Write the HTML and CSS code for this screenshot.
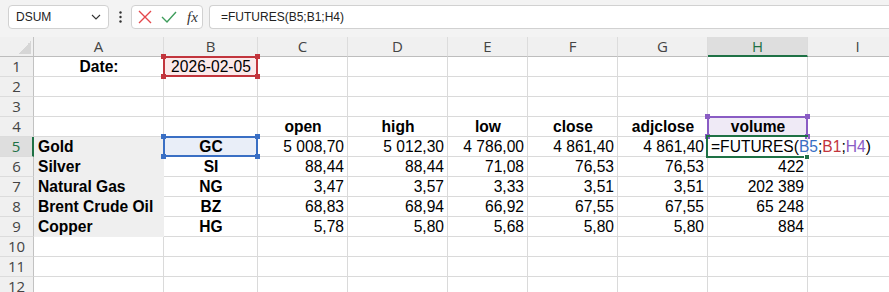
FILE: index.html
```html
<!DOCTYPE html>
<html lang="en">
<head>
  <meta charset="UTF-8">
  <meta name="viewport" content="width=device-width, initial-scale=1.0">
  <link rel="stylesheet" href="styles.css">
  <title>Futures sheet</title>
</head>
<body>
  <div class="toolbar">
    <div class="namebox">
      <span>DSUM</span>
      <svg width="10" height="6" viewBox="0 0 10 6"><path d="M1 1 L5 5 L9 1" fill="none" stroke="#333" stroke-width="1.1"/></svg>
    </div>
    <div class="more">
      <svg width="3" height="12" viewBox="0 0 3 12"><circle cx="1.5" cy="1.5" r="1.2" fill="#333"/><circle cx="1.5" cy="6" r="1.2" fill="#333"/><circle cx="1.5" cy="10.5" r="1.2" fill="#333"/></svg>
    </div>
    <div class="actions">
      <svg width="14" height="14" viewBox="0 0 14 14"><path d="M1 1 L13 13 M13 1 L1 13" stroke="#e4474b" stroke-width="1.4" fill="none"/></svg>
      <svg width="16" height="14" viewBox="0 0 16 14"><path d="M1 7 L6 12 L15 2" stroke="#3f9d5c" stroke-width="1.4" fill="none"/></svg>
      <span class="fx">fx</span>
    </div>
    <div class="formula">=FUTURES(B5;B1;H4)</div>
  </div>

  <div class="sheet">
    <!-- column headers -->
    <div class="hd corner"></div>
    <div class="hd col">A</div>
    <div class="hd col">B</div>
    <div class="hd col">C</div>
    <div class="hd col">D</div>
    <div class="hd col">E</div>
    <div class="hd col">F</div>
    <div class="hd col">G</div>
    <div class="hd col on">H</div>
    <div class="hd col">I</div>

    <!-- row 1 -->
    <div class="hd row">1</div>
    <div class="c b mid">Date:</div>
    <div class="c mid ref red">2026-02-05</div>
    <div class="c"></div><div class="c"></div><div class="c"></div><div class="c"></div><div class="c"></div><div class="c"></div><div class="c"></div>

    <!-- row 2 -->
    <div class="hd row">2</div>
    <div class="c"></div><div class="c"></div><div class="c"></div><div class="c"></div><div class="c"></div><div class="c"></div><div class="c"></div><div class="c"></div><div class="c"></div>

    <!-- row 3 -->
    <div class="hd row">3</div>
    <div class="c"></div><div class="c"></div><div class="c"></div><div class="c"></div><div class="c"></div><div class="c"></div><div class="c"></div><div class="c"></div><div class="c"></div>

    <!-- row 4 -->
    <div class="hd row">4</div>
    <div class="c"></div>
    <div class="c"></div>
    <div class="c b mid">open</div>
    <div class="c b mid">high</div>
    <div class="c b mid">low</div>
    <div class="c b mid">close</div>
    <div class="c b mid">adjclose</div>
    <div class="c b mid ref purple">volume</div>
    <div class="c"></div>

    <!-- row 5 -->
    <div class="hd row on">5</div>
    <div class="c b fill">Gold</div>
    <div class="c b mid ref blue">GC</div>
    <div class="c num">5 008,70</div>
    <div class="c num">5 012,30</div>
    <div class="c num">4 786,00</div>
    <div class="c num">4 861,40</div>
    <div class="c num">4 861,40</div>
    <div class="c active">=FUTURES(<span class="t-blue">B5</span>;<span class="t-red">B1</span>;<span class="t-purple">H4</span>)</div>
    <div class="c"></div>

    <!-- row 6 -->
    <div class="hd row">6</div>
    <div class="c b fill">Silver</div>
    <div class="c b mid">SI</div>
    <div class="c num">88,44</div>
    <div class="c num">88,44</div>
    <div class="c num">71,08</div>
    <div class="c num">76,53</div>
    <div class="c num">76,53</div>
    <div class="c num">422</div>
    <div class="c"></div>

    <!-- row 7 -->
    <div class="hd row">7</div>
    <div class="c b fill">Natural Gas</div>
    <div class="c b mid">NG</div>
    <div class="c num">3,47</div>
    <div class="c num">3,57</div>
    <div class="c num">3,33</div>
    <div class="c num">3,51</div>
    <div class="c num">3,51</div>
    <div class="c num">202 389</div>
    <div class="c"></div>

    <!-- row 8 -->
    <div class="hd row">8</div>
    <div class="c b fill">Brent Crude Oil</div>
    <div class="c b mid">BZ</div>
    <div class="c num">68,83</div>
    <div class="c num">68,94</div>
    <div class="c num">66,92</div>
    <div class="c num">67,55</div>
    <div class="c num">67,55</div>
    <div class="c num">65 248</div>
    <div class="c"></div>

    <!-- row 9 -->
    <div class="hd row">9</div>
    <div class="c b fill">Copper</div>
    <div class="c b mid">HG</div>
    <div class="c num">5,78</div>
    <div class="c num">5,80</div>
    <div class="c num">5,68</div>
    <div class="c num">5,80</div>
    <div class="c num">5,80</div>
    <div class="c num">884</div>
    <div class="c"></div>

    <!-- rows 10-12 -->
    <div class="hd row">10</div>
    <div class="c"></div><div class="c"></div><div class="c"></div><div class="c"></div><div class="c"></div><div class="c"></div><div class="c"></div><div class="c"></div><div class="c"></div>
    <div class="hd row">11</div>
    <div class="c"></div><div class="c"></div><div class="c"></div><div class="c"></div><div class="c"></div><div class="c"></div><div class="c"></div><div class="c"></div><div class="c"></div>
    <div class="hd row">12</div>
    <div class="c"></div><div class="c"></div><div class="c"></div><div class="c"></div><div class="c"></div><div class="c"></div><div class="c"></div><div class="c"></div><div class="c"></div>
  </div>
</body>
</html>
```

FILE: styles.css
```css
body {
  margin: 0;
  width: 889px;
  height: 292px;
  overflow: hidden;
  background: #fff;
  font-family: "Liberation Sans", Arial, sans-serif;
}

/* formula bar */
.toolbar {
  height: 37px;
  background: #f3f3f3;
  display: flex;
  align-items: flex-start;
  padding: 5px 0 0 8px;
  box-sizing: border-box;
}
.namebox {
  width: 101px;
  height: 24px;
  box-sizing: border-box;
  border: 1px solid #d1d1d1;
  border-radius: 4px;
  background: #fff;
  display: flex;
  align-items: center;
  justify-content: space-between;
  padding: 0 7px 0 7px;
  font-size: 12px;
  color: #222;
}
.more {
  width: 22px;
  height: 24px;
  display: flex;
  align-items: center;
  justify-content: center;
}
.actions {
  width: 72px;
  height: 24px;
  box-sizing: border-box;
  border: 1px solid #d1d1d1;
  border-radius: 4px;
  background: #fff;
  display: flex;
  align-items: center;
  gap: 9px;
  padding-left: 6px;
}
.fx {
  font-family: "Liberation Serif", "Times New Roman", serif;
  font-style: italic;
  font-size: 15px;
  color: #333;
  margin-left: 1px;
}
.formula {
  flex: 1;
  margin-left: 6px;
  height: 24px;
  box-sizing: border-box;
  border: 1px solid #d1d1d1;
  border-right: none;
  border-radius: 4px 0 0 4px;
  background: #fff;
  font-size: 12px;
  line-height: 22px;
  padding-left: 11px;
  color: #222;
}

/* grid */
.sheet {
  display: grid;
  grid-template-columns: 34px 130px 94px 90px 100px 80px 90px 90px 100px 100px;
  grid-auto-rows: 20px;
}
.hd {
  box-sizing: border-box;
  background: #f0f0f0;
  font-family: "Open Sans", sans-serif;
  font-size: 15px;
  line-height: 19px;
  color: #444;
  text-align: center;
}
.hd.col {
  border-right: 1px solid #dcdcdc;
  border-bottom: 1px solid #bdbdbd;
}
.hd.row {
  border-right: 1px solid #c2c2c2;
  border-bottom: 1px solid #dcdcdc;
}
.hd.corner {
  border-right: 1px solid #c2c2c2;
  border-bottom: 1px solid #bdbdbd;
  background: #f0f0f0 linear-gradient(to bottom right, transparent 50%, #d6d6d6 50%) no-repeat right 2px bottom 2px / 13px 13px;
}
.hd.col.on {
  background: #dedede;
  color: #1e7145;
  border-bottom: 2px solid #1e7145;
  line-height: 18px;
}
.hd.row.on {
  background: #dedede;
  color: #1e7145;
  border-right: 2px solid #1e7145;
}

.c {
  box-sizing: border-box;
  border-right: 1px solid #dadada;
  border-bottom: 1px solid #dadada;
  font-size: 15.6px;
  line-height: 19px;
  color: #000;
  padding: 0 3px 0 4px;
  white-space: nowrap;
}
.b { font-weight: bold; }
.mid { text-align: center; }
.num { text-align: right; }
.fill {
  background: #efefef;
  border-color: #efefef;
}

/* reference highlights */
.ref { position: relative; }
.ref::before {
  content: "";
  position: absolute;
  top: -1px;
  left: -1px;
  right: -1px;
  bottom: -1px;
  border: 2px solid var(--ref);
}
.ref::after {
  content: "";
  position: absolute;
  top: -3px;
  left: -3px;
  right: -3px;
  bottom: -3px;
  background:
    linear-gradient(var(--ref), var(--ref)) left top / 5px 5px no-repeat,
    linear-gradient(var(--ref), var(--ref)) right top / 5px 5px no-repeat,
    linear-gradient(var(--ref), var(--ref)) left bottom / 5px 5px no-repeat,
    linear-gradient(var(--ref), var(--ref)) right bottom / 5px 5px no-repeat;
}
.red { --ref: #c2353d; background: #fbe9ea; }
.blue { --ref: #3a6fc4; background: #e9eef8; }
.purple { --ref: #8a5cc4; background: #efeaf6; }

.t-red { color: #c2353d; }
.t-blue { color: #3a6fc4; }
.t-purple { color: #8a5cc4; }

/* active cell in edit mode */
.active {
  position: relative;
  overflow: visible;
  padding-left: 3px;
}
.active::before {
  content: "";
  position: absolute;
  top: -2px;
  left: -2px;
  right: -1px;
  bottom: -2px;
  border: 2px solid #1e7145;
  border-right: none;
}
.active::after {
  content: "";
  position: absolute;
  right: -3px;
  bottom: -4px;
  width: 4px;
  height: 4px;
  background: #1e7145;
  border: 1px solid #fff;
}
```
